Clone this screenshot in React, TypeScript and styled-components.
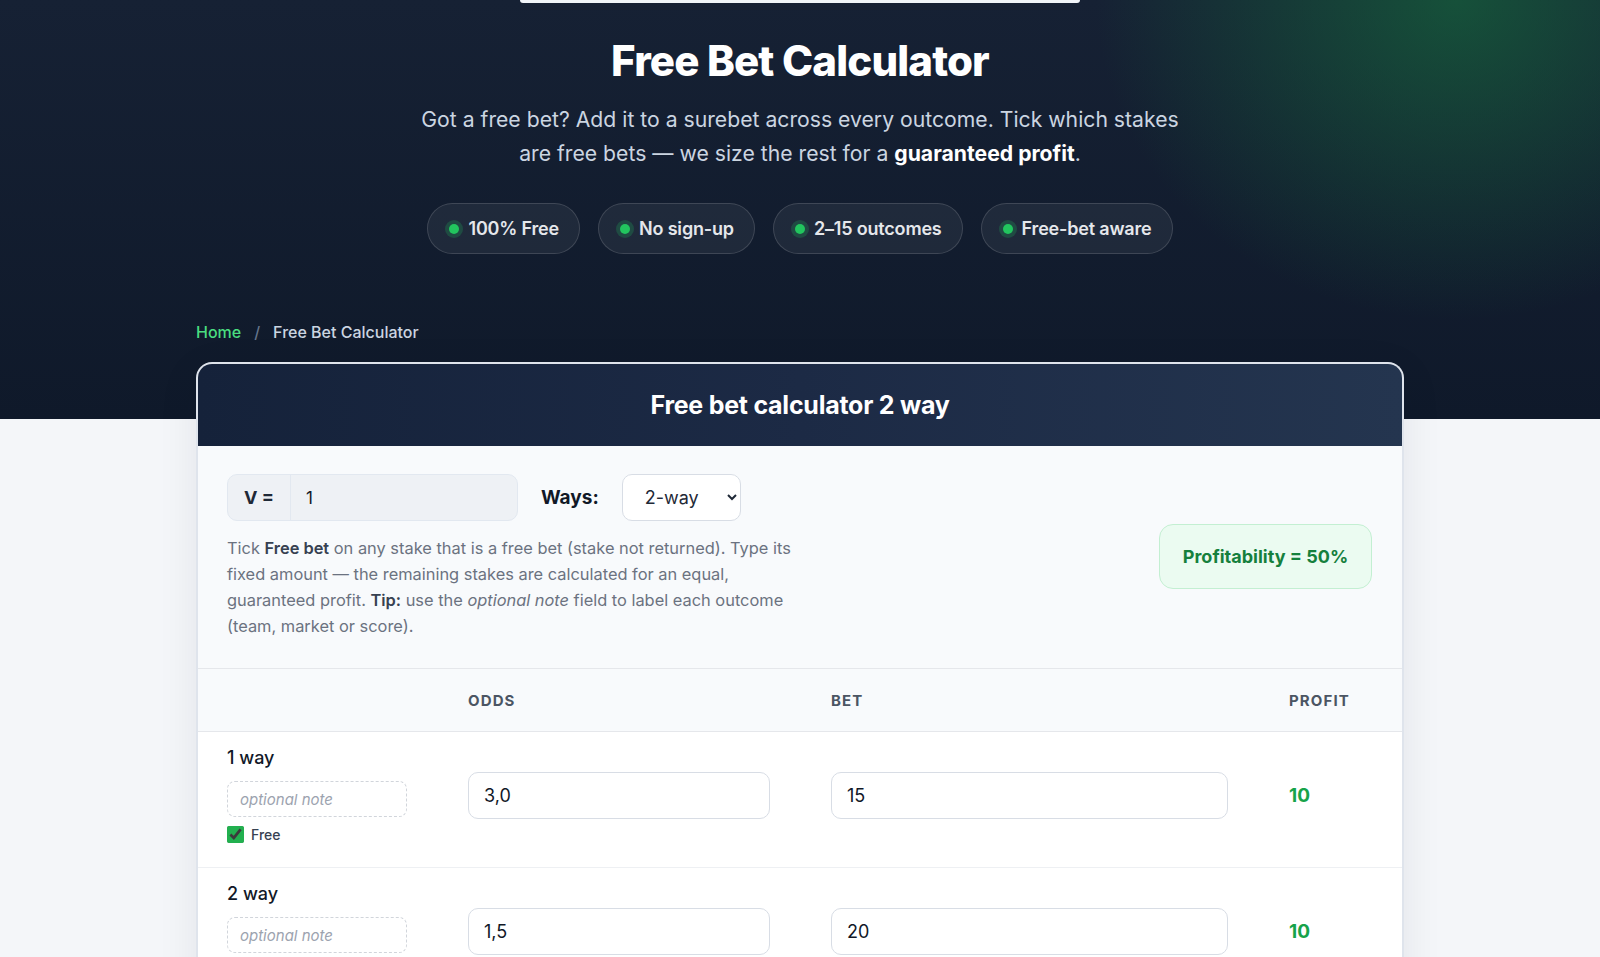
import React, { useState } from 'react';
import styled, { createGlobalStyle } from 'styled-components';

const GlobalStyle = createGlobalStyle`
  * { box-sizing: border-box; }
  html, body { margin: 0; padding: 0; }
  body {
    background: #f4f6f9;
    font-family: Inter, 'Noto Sans', 'Liberation Sans', sans-serif;
    color: #111827;
  }
`;

const Page = styled.div`
  min-height: 100vh;
  overflow: hidden;
`;

const Hero = styled.header`
  background:
    radial-gradient(ellipse 360px 320px at 91% 0%, rgba(22, 115, 62, 0.58), transparent 100%),
    linear-gradient(180deg, #162134 0%, #0f192a 100%);
  padding: 0 0 75px;
  display: flex;
  flex-direction: column;
  align-items: center;
`;

const NavEdge = styled.div`
  width: 560px;
  height: 3px;
  background: #f1f5f9;
  border-radius: 0 0 6px 6px;
`;

const Title = styled.h1`
  margin: 33px 0 0;
  font-size: 42px;
  line-height: 50px;
  font-weight: 800;
  letter-spacing: -0.02em;
  color: #ffffff;
`;

const Lead = styled.p`
  margin: 16px 0 0;
  max-width: 790px;
  text-align: center;
  font-size: 21.2px;
  line-height: 34px;
  color: #cbd5e1;

  strong {
    color: #ffffff;
    font-weight: 700;
  }
`;

const Pills = styled.div`
  display: flex;
  gap: 18px;
  margin-top: 33px;
`;

const Pill = styled.div`
  height: 51px;
  display: flex;
  align-items: center;
  gap: 9px;
  padding: 0 20px 0 21px;
  border-radius: 999px;
  background: rgba(255, 255, 255, 0.06);
  border: 1px solid rgba(255, 255, 255, 0.14);
  font-size: 18px;
  font-weight: 600;
  letter-spacing: -0.01em;
  color: #e5e7eb;
`;

const Dot = styled.span`
  width: 10px;
  height: 10px;
  border-radius: 50%;
  background: #22c55e;
  box-shadow: 0 0 0 4px rgba(34, 197, 94, 0.22);
`;

const Crumbs = styled.nav`
  width: 1208px;
  margin-top: 66px;
  display: flex;
  align-items: center;
  font-size: 16px;
  line-height: 24px;
  font-weight: 500;
  color: #cbd5e1;
`;

const CrumbLink = styled.a`
  color: #4ade80;
  text-decoration: none;
`;

const Sep = styled.span`
  color: #64748b;
  margin: 0 13px;
`;

const Card = styled.section`
  width: 1208px;
  margin: -57px auto 0;
  border-radius: 16px 16px 0 0;
  border: 2px solid #dfe4ec;
  border-bottom: none;
  background: #f8fafc;
  box-shadow: 0 10px 40px rgba(15, 23, 42, 0.08);
  overflow: hidden;
`;

const CardHead = styled.div`
  height: 82px;
  display: flex;
  align-items: center;
  justify-content: center;
  background: linear-gradient(90deg, #15223a 0%, #1c2a45 50%, #24354f 100%);
  color: #ffffff;
  font-size: 25px;
  font-weight: 700;
  letter-spacing: -0.01em;
`;

const Controls = styled.div`
  display: flex;
  align-items: center;
  justify-content: space-between;
  padding: 28px 30px 29px 29px;
  border-bottom: 1px solid #e5e7eb;
`;

const ControlsLeft = styled.div`
  display: flex;
  flex-direction: column;
`;

const ControlRow = styled.div`
  display: flex;
  align-items: center;
`;

const ValueGroup = styled.div`
  width: 291px;
  height: 47px;
  display: flex;
  border: 1px solid #e2e8f0;
  border-radius: 10px;
  background: #eef1f5;
  overflow: hidden;
`;

const ValuePrefix = styled.span`
  width: 63px;
  display: flex;
  align-items: center;
  justify-content: center;
  border-right: 1px solid #e2e8f0;
  font-size: 18px;
  font-weight: 700;
  color: #1f2937;
`;

const ValueInput = styled.input`
  flex: 1;
  min-width: 0;
  border: none;
  background: transparent;
  padding: 0 15px;
  font: inherit;
  font-size: 17px;
  color: #111827;
  outline: none;
`;

const WaysLabel = styled.label`
  margin: 0 23px 0 23px;
  font-size: 19px;
  font-weight: 700;
  color: #111827;
`;

const WaysSelect = styled.select`
  width: 119px;
  height: 47px;
  padding: 0 10px 0 18px;
  border: 1px solid #d8dde5;
  border-radius: 10px;
  background: #ffffff;
  font-family: inherit;
  font-size: 18px;
  color: #1f2937;
`;

const Hint = styled.p`
  margin: 14px 0 0;
  max-width: 580px;
  font-size: 16.4px;
  line-height: 26px;
  color: #6b7280;

  b {
    color: #374151;
    font-weight: 600;
  }
`;

const Profitability = styled.div`
  width: 213px;
  height: 65px;
  display: flex;
  align-items: center;
  justify-content: center;
  border-radius: 14px;
  background: #ebfbf1;
  border: 1px solid #c3efd2;
  color: #15803d;
  font-size: 18px;
  font-weight: 700;
`;

const Grid = styled.div`
  display: grid;
  grid-template-columns: 180px 302px 397px 1fr;
  column-gap: 61px;
  align-items: center;
  padding: 0 30px 0 29px;
`;

const HeadRow = styled(Grid)`
  height: 63px;
  background: #f8fafc;
  border-bottom: 1px solid #e5e7eb;
`;

const ColHead = styled.span`
  font-size: 15px;
  font-weight: 700;
  letter-spacing: 0.075em;
  color: #4b5563;
`;

const Row = styled(Grid)`
  background: #ffffff;
  padding-top: 16px;
  padding-bottom: 24px;
  border-bottom: 1px solid #eef0f3;
`;

const Outcome = styled.div`
  display: flex;
  flex-direction: column;
`;

const OutcomeName = styled.div`
  font-size: 18px;
  line-height: 20px;
  font-weight: 500;
  color: #111827;
`;

const NoteInput = styled.input`
  margin-top: 13px;
  width: 180px;
  height: 36px;
  padding: 0 12px;
  border: 1px dashed #d1d5db;
  border-radius: 8px;
  background: #ffffff;
  font-family: inherit;
  font-size: 15px;
  outline: none;

  &::placeholder {
    color: #9ca3af;
    font-style: italic;
  }
`;

const FreeLabel = styled.label`
  margin-top: 9px;
  display: flex;
  align-items: center;
  gap: 7px;
  font-size: 14px;
  font-weight: 500;
  color: #374151;

  input {
    margin: 0;
    width: 17px;
    height: 17px;
    accent-color: #22b04f;
  }
`;

const NumInput = styled.input`
  width: 100%;
  height: 47px;
  padding: 0 15px;
  border: 1px solid #d8dde5;
  border-radius: 10px;
  background: #ffffff;
  font-family: inherit;
  font-size: 18px;
  color: #111827;
  outline: none;
`;

const Profit = styled.span`
  font-size: 19px;
  font-weight: 700;
  color: #16a34a;
`;

const rows = [
  { name: '1 way', odds: '3,0', bet: '15', profit: '10', free: true },
  { name: '2 way', odds: '1,5', bet: '20', profit: '10', free: false },
];

const App: React.FC = () => {
  const [ways, setWays] = useState('2');

  return (
    <Page>
      <GlobalStyle />
      <Hero>
        <NavEdge />
        <Title>Free Bet Calculator</Title>
        <Lead>
          Got a free bet? Add it to a surebet across every outcome. Tick which stakes
          are free bets — we size the rest for a <strong>guaranteed profit</strong>.
        </Lead>
        <Pills>
          {['100% Free', 'No sign-up', '2–15 outcomes', 'Free-bet aware'].map((p) => (
            <Pill key={p}>
              <Dot />
              {p}
            </Pill>
          ))}
        </Pills>
        <Crumbs>
          <CrumbLink href="#">Home</CrumbLink>
          <Sep>/</Sep>
          <span>Free Bet Calculator</span>
        </Crumbs>
      </Hero>

      <Card>
        <CardHead>Free bet calculator {ways} way</CardHead>
        <Controls>
          <ControlsLeft>
            <ControlRow>
              <ValueGroup>
                <ValuePrefix>V =</ValuePrefix>
                <ValueInput defaultValue="1" />
              </ValueGroup>
              <WaysLabel>Ways:</WaysLabel>
              <WaysSelect value={ways} onChange={(e) => setWays(e.target.value)}>
                {Array.from({ length: 14 }, (_, i) => i + 2).map((n) => (
                  <option key={n} value={String(n)}>
                    {n}-way
                  </option>
                ))}
              </WaysSelect>
            </ControlRow>
            <Hint>
              Tick <b>Free bet</b> on any stake that is a free bet (stake not returned). Type its
              fixed amount — the remaining stakes are calculated for an equal, guaranteed
              profit. <b>Tip:</b> use the <i>optional note</i> field to label each outcome
              (team, market or score).
            </Hint>
          </ControlsLeft>
          <Profitability>Profitability = 50%</Profitability>
        </Controls>

        <HeadRow>
          <span />
          <ColHead>ODDS</ColHead>
          <ColHead>BET</ColHead>
          <ColHead>PROFIT</ColHead>
        </HeadRow>

        {rows.map((r) => (
          <Row key={r.name}>
            <Outcome>
              <OutcomeName>{r.name}</OutcomeName>
              <NoteInput placeholder="optional note" />
              <FreeLabel>
                <input type="checkbox" defaultChecked={r.free} />
                Free
              </FreeLabel>
            </Outcome>
            <NumInput defaultValue={r.odds} />
            <NumInput defaultValue={r.bet} />
            <Profit>{r.profit}</Profit>
          </Row>
        ))}
      </Card>
    </Page>
  );
};

export default App;
